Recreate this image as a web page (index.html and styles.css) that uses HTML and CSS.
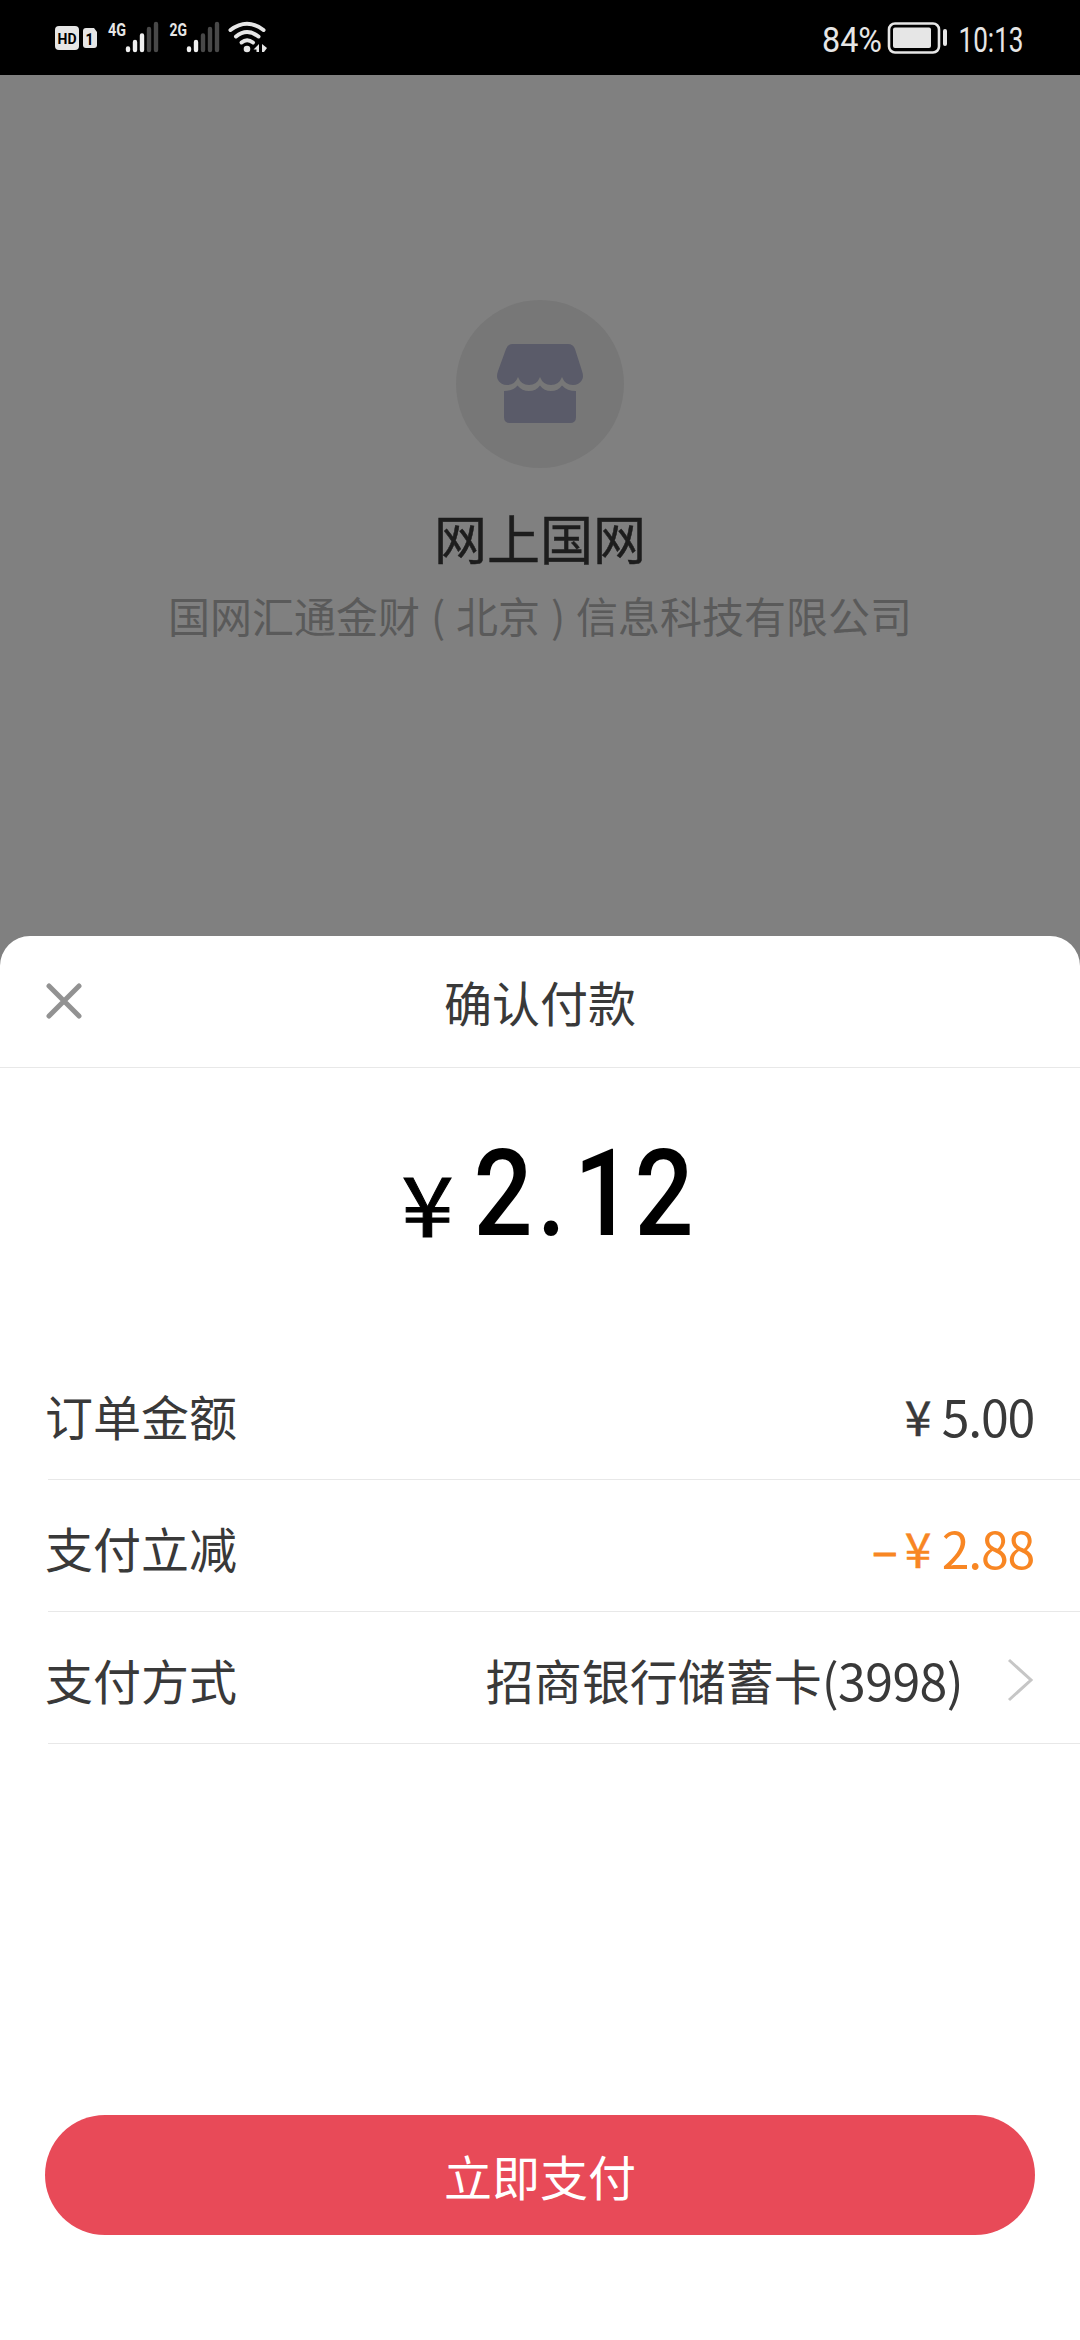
FILE: index.html
```html
<!DOCTYPE html>
<html lang="zh-CN">
<head>
<meta charset="utf-8">
<title>确认付款</title>
<link rel="stylesheet" href="styles.css">
</head>
<body>
<div class="screen">
  <header class="status">
    <svg class="status-left" width="220" height="75" viewBox="50 0 220 75">
      <rect class="lit" x="55" y="26" width="24" height="24" rx="4"/>
      <text class="chip" x="57.5" y="43.5" font-size="15.5" textLength="19" lengthAdjust="spacingAndGlyphs">HD</text>
      <path class="lit" d="M86 28h8l3 4v13q0 3-3 3h-8q-3 0-3-3v-14q0-3 3-3z"/>
      <text class="chip" x="85.5" y="44.5" font-size="17" textLength="8" lengthAdjust="spacingAndGlyphs">1</text>
      <text class="net" x="108" y="35.5" textLength="18" lengthAdjust="spacingAndGlyphs">4G</text>
      <g class="bars">
        <path d="M128 48.5V50M135 42V50M142 35.500V50"/>
        <path class="off" d="M149 29V50M156 24V50"/>
      </g>
      <text class="net" x="169.500" y="35.5" textLength="17.500" lengthAdjust="spacingAndGlyphs">2G</text>
      <g class="bars">
        <path d="M189 48.5V50M196 42V50"/>
        <path class="off" d="M203 35.5V50M210 29V50M217 24V50"/>
      </g>
      <g class="wifi">
        <path d="M230.500 30Q247 17.500 263.500 30"/>
        <path d="M236 36.500Q247 27.500 258.500 36.500"/>
        <path d="M241.500 42.500Q247 38 253 42.500"/>
      </g>
      <circle class="lit" cx="247" cy="49" r="3.300"/>
      <path class="lit" d="M259 44v8h-2.500v-2.500h-3zM262 44l5 4-3 4h-2z"/>
    </svg>
    <svg class="status-right" width="260" height="75" viewBox="820 0 260 75">
      <text class="clock" x="822" y="51.500" textLength="60" lengthAdjust="spacingAndGlyphs">84%</text>
      <rect class="cell" x="889" y="23.500" width="50" height="29" rx="6"/>
      <rect class="lit" x="893" y="27.500" width="38" height="20.500" rx="2"/>
      <rect class="lit" x="943" y="29" width="4" height="17" rx="2"/>
      <text class="clock" x="958.500" y="51.500" textLength="65" lengthAdjust="spacingAndGlyphs">10:13</text>
    </svg>
  </header>

  <main class="merchant">
    <div class="avatar">
      <svg width="88" height="82" viewBox="0 0 88 82">
        <path d="M16 1h56q5 0 7 5l7 22q2 6 0 9-3 5-9 5-8 0-11-8-3 8-11 8t-11-8q-3 8-11 8t-11-8q-3 8-11 8-6 0-9-5-2-3 0-9l8-22q2-5 6-5z"/>
        <path d="M8 48q9 0 13.500-5.500Q26 48 33 48t11-5.500Q48 48 55 48t11-5.500Q71 48 80 48v26q0 6-6 6H14q-6 0-6-6z"/>
      </svg>
    </div>
    <h1 class="name">网上国网</h1>
    <p class="company">国网汇通金财<span class="paren">(</span>北京<span class="paren">)</span>信息科技有限公司</p>
  </main>

  <section class="sheet">
    <div class="sheet-head">
      <svg class="close" width="36" height="36" viewBox="0 0 36 36"><path d="M3 3L33 33M33 3L3 33"/></svg>
      <h2 class="sheet-title">确认付款</h2>
    </div>
    <div class="total">
      <svg width="340" height="200" viewBox="375 1090 340 200">
        <text class="total-yen" x="401.500" y="1237" textLength="52" lengthAdjust="spacingAndGlyphs">¥</text>
        <text class="total-num" transform="scale(.86 1)" x="550.6 624.5 667.5 737.8" y="1235">2.12</text>
      </svg>
    </div>
    <div class="rows">
      <div class="row"><span class="label">订单金额</span><span class="value"><span class="yen">¥</span><span class="num">5.00</span></span></div>
      <div class="row"><span class="label">支付立减</span><span class="value discount"><span class="minus">–</span><span class="yen">¥</span><span class="num">2.88</span></span></div>
      <div class="row"><span class="label">支付方式</span><span class="value">招商银行储蓄卡<span class="num tail">(3998)</span><svg class="chevron" width="28" height="46" viewBox="0 0 28 46"><path d="M3 3L25 23L3 43"/></svg></span></div>
    </div>
    <button class="pay">立即支付</button>
  </section>
</div>
</body>
</html>
```
FILE: styles.css
```css
* { box-sizing: border-box; margin: 0; padding: 0; }
body { font-family: "Noto Sans CJK SC", sans-serif; color: #393939; background: #808080; }
svg { display: block; }
.screen { width: 1080px; height: 2340px; display: flex; flex-direction: column; overflow: hidden; }

.status { height: 75px; flex: none; background: #000; display: flex; justify-content: space-between; padding-left: 50px; }
.lit { fill: #e6e6e6; }
.chip { font-family: Roboto, sans-serif; font-weight: 700; fill: #000; }
.net { font: 700 18.5px Roboto, sans-serif; fill: #e6e6e6; }
.bars path { fill: none; stroke: #f0f0f0; stroke-width: 4.4; stroke-linecap: round; }
.bars .off { stroke: #484848; }
.wifi path { fill: none; stroke: #e6e6e6; stroke-width: 4; stroke-linecap: round; }
.clock { font: 400 35px Roboto, sans-serif; fill: #e6e6e6; }
.cell { fill: none; stroke: #e6e6e6; stroke-width: 2.6; }

.merchant { height: 861px; flex: none; display: flex; flex-direction: column; align-items: center; padding-top: 225px; }
.avatar { width: 168px; height: 168px; border-radius: 50%; background: #777; display: flex; align-items: center; justify-content: center; }
.avatar svg { fill: #5a5b69; }
.name { font-size: 53px; line-height: 70px; font-weight: 400; -webkit-text-stroke: 0.5px #1d1d1d; color: #1d1d1d; margin-top: 34px; }
.company { font-size: 42px; line-height: 60px; color: #5a5a5a; margin-top: 13px; white-space: nowrap; }
.paren { display: inline-block; width: 36px; text-align: center; }

.sheet { flex: 1; background: #fff; border-radius: 30px 30px 0 0; display: flex; flex-direction: column; }
.sheet-head { height: 132px; display: grid; grid-template-columns: 36px 1fr 36px; align-items: center; padding: 0 46px 2px; border-bottom: 1px solid #e8e8e8; }
.close { fill: none; stroke: #929292; stroke-width: 5; stroke-linecap: round; }
.sheet-title { font-size: 48px; line-height: 70px; font-weight: 400; text-align: center; }
.total { height: 280px; padding: 22px 0 0 375px; }
.total-yen { font: 400 83px "Noto Sans CJK SC", sans-serif; fill: #000; stroke: #000; stroke-width: 1; }
.total-num { font: 500 121px Roboto, sans-serif; fill: #000; }
.rows { padding-left: 48px; }
.row { height: 132px; display: flex; align-items: center; justify-content: space-between; padding: 2px 46px 0 0; border-bottom: 1px solid #e8e8e8; font-size: 48px; line-height: 70px; }
.label { margin-left: -3px; }
.value { display: flex; align-items: center; }
.num { font-size: 50px; letter-spacing: -1.2px; }
.tail { letter-spacing: -0.6px; }
.yen { width: 27px; margin-right: 10px; display: flex; justify-content: center; -webkit-text-stroke: 0.5px currentColor; }
.discount { color: #f88623; }
.minus { margin-right: 7px; -webkit-text-stroke: 1px currentColor; }
.chevron { margin: 3px 0 0 43px; fill: none; stroke: #c6c6c6; stroke-width: 3; }
.pay { width: 990px; height: 120px; margin: 371px 45px 0; border: 0; border-radius: 60px; background: #e84a58; color: #fff; font: 400 48px/70px "Noto Sans CJK SC", sans-serif; }
```
